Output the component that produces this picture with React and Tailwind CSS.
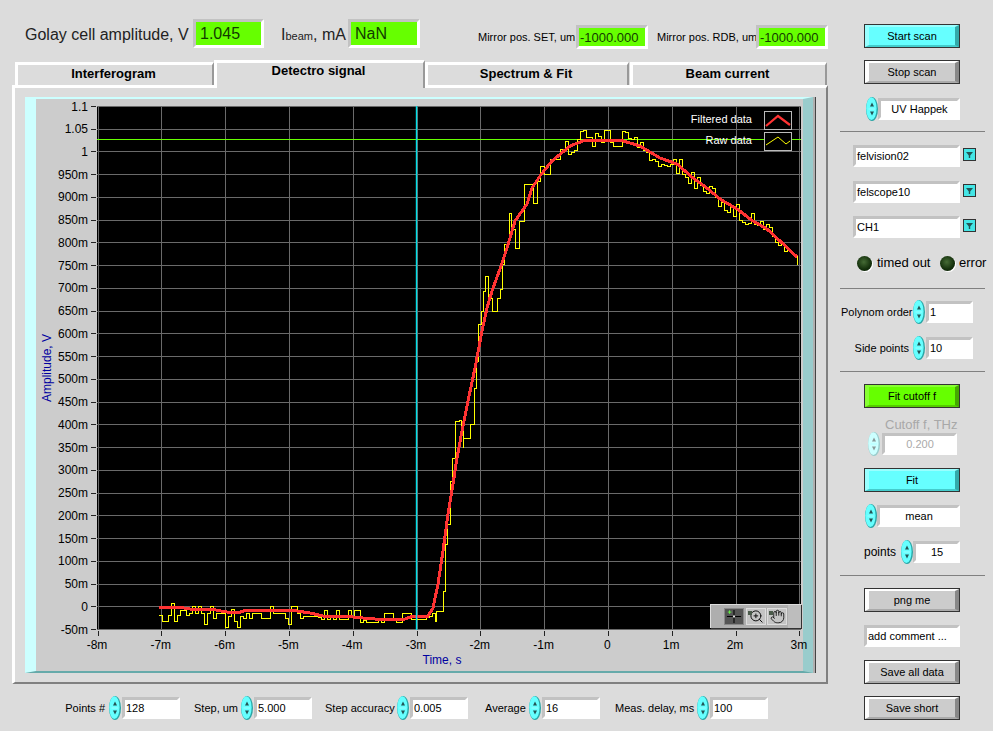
import { ZoomIn, Hand } from 'lucide-react'

const FONT = "font-['Liberation_Sans',sans-serif]"

// plot geometry, in page pixels
const X_TICKS = ['-8m', '-7m', '-6m', '-5m', '-4m', '-3m', '-2m', '-1m', '0', '1m', '2m', '3m']
const Y_TICKS = ['1.1', '1.05', '1']
for (let v = 950; v >= 50; v -= 50) Y_TICKS.push(v + 'm')
Y_TICKS.push('0', '-50m')
const xAt = (i) => 98 + i * 63.8
const yAt = (i) => 105.5 + i * 22.74

const RED = [
  [159, 606], [178, 606], [190, 608], [210, 608], [227, 611], [237, 612], [247, 609], [277, 609], [297, 610],
  [310, 612], [323, 615], [343, 615], [363, 617], [387, 619], [405, 618], [413, 615], [428, 615], [433, 607],
  [438, 583], [443, 550], [448, 513], [453, 483], [457, 457], [462, 430], [468, 400], [475, 367], [482, 330],
  [487, 307], [492, 290], [500, 268], [507, 247], [515, 220], [527, 203], [532, 187], [540, 175], [552, 160],
  [570, 145], [583, 140], [600, 139], [620, 139], [640, 145], [660, 157], [677, 163], [693, 177], [707, 187],
  [720, 198], [737, 208], [753, 220], [767, 228], [780, 240], [797, 256],
]

const RISE = [
  [435, 620], [436, 610], [440, 610], [443, 590], [445, 543], [447, 523], [450, 480], [452, 457], [455, 420],
  [459, 419], [461, 428], [463, 447], [463, 437], [467, 437], [470, 423], [474, 387], [476, 360], [478, 323],
  [481, 310], [483, 290], [485, 275], [488, 297], [492, 310], [494, 310], [497, 297], [500, 288], [502, 263],
  [504, 243], [509, 212], [511, 228], [515, 247], [519, 220], [524, 183], [528, 183], [533, 202], [537, 180],
  [540, 165], [544, 173], [550, 158], [560, 148], [565, 140],
]

function redAt(x) {
  for (let i = 1; i < RED.length; i++) {
    if (x <= RED[i][0]) {
      const [x0, y0] = RED[i - 1]
      const [x1, y1] = RED[i]
      return y0 + ((y1 - y0) * (x - x0)) / (x1 - x0)
    }
  }
  return RED[RED.length - 1][1]
}

function rawPath() {
  let seed = 41
  const rnd = () => {
    seed = (seed * 1103515 + 12345) % 2147483648
    return (seed >> 8) % 1000 / 1000
  }
  let d = ''
  let last = null
  const step = (x, y) => {
    d += last === null ? `M${x} ${y}` : `H${x}V${y}`
    last = y
  }
  for (let x = 159; x < 435; x += 3) {
    const r = rnd()
    const quiet = x > 305
    let off = r < 0.4 ? 3 : r < 0.65 ? -4 : r < 0.85 ? 8 : 14
    if (quiet) off = r < 0.62 ? 3 : r < 0.82 ? -6 : r < 0.95 ? 1 : 12
    step(x, Math.round(redAt(x) / 3) * 3 + off)
  }
  for (const [x, y] of RISE) step(x, y)
  for (let x = 568; x <= 795; x += 3) {
    const r = rnd()
    let off = r < 0.3 ? 2 : r < 0.55 ? 6 : r < 0.8 ? -4 : r < 0.92 ? 9 : -7
    if (x > 578 && x < 584) off = -11
    if (x > 603 && x < 609) off = -10
    if (x > 621 && x < 627) off = -10
    step(x, Math.round(redAt(x)) + off)
  }
  step(797, 264)
  return d
}

function Plot() {
  return (
    <svg viewBox="36 98 767 573" className="block h-[573px] w-[767px] overflow-visible">
      <rect x="97" y="105" width="704" height="524" fill="#000" />
      <g stroke="#6a6a6a" strokeWidth="1" shapeRendering="crispEdges">
        {X_TICKS.map((_, i) => (
          <line key={i} x1={xAt(i)} x2={xAt(i)} y1="105" y2="629" />
        ))}
        {Y_TICKS.map((_, i) => (
          <line key={i} x1="97" x2="801" y1={yAt(i)} y2={yAt(i)} />
        ))}
      </g>
      <line x1="97" x2="801" y1="138.5" y2="138.5" stroke="#66ff00" shapeRendering="crispEdges" />
      <path d={rawPath()} fill="none" stroke="#ffff00" strokeWidth="1" shapeRendering="crispEdges" />
      <polyline points={RED.map((p) => p.join(',')).join(' ')} fill="none" stroke="#ff3333" strokeWidth="3" shapeRendering="crispEdges" />
      <line x1="416.5" x2="416.5" y1="105" y2="629" stroke="#00e0e8" strokeWidth="1.4" />

      <g stroke="#222" shapeRendering="crispEdges">
        {X_TICKS.map((_, i) => (
          <line key={i} x1={xAt(i)} x2={xAt(i)} y1="630" y2="635" />
        ))}
        {Y_TICKS.map((_, i) => (
          <line key={i} x1="91" x2="96" y1={yAt(i)} y2={yAt(i)} />
        ))}
      </g>
      <g className={`${FONT} text-[12px]`} fill="#000">
        {X_TICKS.map((t, i) => (
          <text key={t} x={xAt(i) - 1} y="648" textAnchor="middle">{t}</text>
        ))}
        {Y_TICKS.map((t, i) => (
          <text key={t} x="88" y={yAt(i) + 4} textAnchor="end">{t}</text>
        ))}
      </g>
      <g className={`${FONT} text-[12px]`} fill="#0000a0">
        <text x="442" y="663" textAnchor="middle">Time, s</text>
        <text transform="translate(51 367) rotate(-90)" textAnchor="middle">Amplitude, V</text>
      </g>

      <g className={`${FONT} text-[11px]`} fill="#fff">
        <text x="752" y="122" textAnchor="end">Filtered data</text>
        <text x="752" y="143" textAnchor="end">Raw data</text>
      </g>
      <rect x="764.5" y="110.5" width="27" height="18" fill="#000" stroke="#bbb" />
      <polyline points="766,125 778,115 790,124" fill="none" stroke="#ff3333" strokeWidth="2.2" />
      <rect x="764.5" y="131.5" width="27" height="18" fill="#000" stroke="#bbb" />
      <polyline points="766,144 778,136 786,143 790,140" fill="none" stroke="#ffff00" strokeWidth="1" />
    </svg>
  )
}

function GraphPalette() {
  return (
    <div className="absolute left-[674px] top-[505px] flex h-[24px] w-[91px] items-center border-l border-t border-[#ddd] bg-[#aeaeae] pl-[13px] shadow-[1px_1px_0_#333]">
      <div className="relative h-[17px] w-[20px] border border-[#888] bg-[#555]">
        <svg viewBox="0 0 20 17" className="h-full w-full">
          <path d="M2 8.5H18M10 1V16" stroke="#000" strokeWidth="1.2" />
          <circle cx="10" cy="8.5" r="1.3" fill="#ddd" />
          <path d="M3 3.5H7M5 1.5V5.5" stroke="#66ff44" strokeWidth="1" />
        </svg>
      </div>
      <div className="relative ml-[2px] flex h-[17px] w-[20px] items-center justify-center border border-[#ddd] bg-[#c4c4c4]">
        <span className="absolute left-[1px] top-[2px] h-[4px] w-[4px] bg-[#4a5a4a]" />
        <ZoomIn size={15} strokeWidth={1.6} color="#111" />
      </div>
      <div className="relative ml-[1px] flex h-[17px] w-[20px] items-center justify-center border border-[#ddd] bg-[#c4c4c4]">
        <span className="absolute left-[1px] top-[2px] h-[4px] w-[4px] bg-[#4a5a4a]" />
        <Hand size={15} strokeWidth={1.4} color="#111" />
      </div>
      <div className="ml-[1px] h-full flex-1 bg-[#bdbdbd]" />
    </div>
  )
}

function Indicator({ w, h, big, children }) {
  return (
    <div
      className={`box-border flex items-center border-[3px] border-l-[#c2c2c2] border-t-[#c2c2c2] border-r-white border-b-white bg-[#66ff00] text-[#123c00] ${w} ${h} ${
        big ? 'pl-[4px] text-[16px]' : 'pl-[1px] pt-[1px] text-[13px]'
      }`}
    >
      {children}
    </div>
  )
}

function Tab({ w, active, children }) {
  if (active) {
    return (
      <div className={`relative z-10 -mb-[3px] box-border flex h-[28px] items-start justify-center border-l-[3px] border-t-[3px] border-r-[2px] border-l-white border-t-white border-r-[#999] bg-[#dcdcdc] pr-[3px] text-[13px] font-bold leading-[16px] text-black ${w}`}>
        {children}
      </div>
    )
  }
  return (
    <div className={`box-border flex h-[23px] items-center justify-center border-l-[3px] border-t-[3px] border-r-[2px] border-l-white border-t-white border-r-[#999] bg-[#dcdcdc] pb-[2px] pr-[3px] text-[13px] font-bold text-black ${w}`}>
      {children}
    </div>
  )
}

function Spin({ dim }) {
  const fill = dim ? '#ccffff' : '#66ffff'
  const edge = dim ? '#99cccc' : '#2aa5a5'
  const mark = dim ? '#8a9a9a' : '#225555'
  return (
    <svg viewBox="0 0 12 24" className="block h-[24px] w-[12px] shrink-0">
      <ellipse cx="6" cy="12" rx="6" ry="12" fill={edge} />
      <ellipse cx="5.4" cy="11.6" rx="5.2" ry="11.4" fill={fill} />
      <path d="M6 5.5L4 9.5H8ZM6 18.5L4 14.5H8Z" fill={mark} />
      <path d="M2.5 12H9" stroke="#aaffff" strokeWidth="0.8" />
    </svg>
  )
}

function Field({ w, center, dim, children }) {
  return (
    <div
      className={`box-border flex h-[22px] items-center whitespace-nowrap border-[3px] border-l-[#c2c2c2] border-t-[#c2c2c2] border-r-white border-b-white bg-white pl-[1px] text-[11px] ${
        dim ? 'text-[#aaa]' : 'text-black'
      } ${center ? 'justify-center' : ''} ${w}`}
    >
      {children}
    </div>
  )
}

function Btn({ kind, className, children }) {
  const face = {
    cyan: 'border-l-[#99ffff] border-t-[#99ffff] border-r-[#33aaaa] border-b-[#44cccc] bg-[#66ffff]',
    green: 'border-l-[#88ff33] border-t-[#88ff33] border-r-[#44aa00] border-b-[#55cc00] bg-[#66ff00]',
    gray: 'border-l-white border-t-white border-r-[#888] border-b-[#aaa] bg-[#cccccc]',
  }[kind]
  return (
    <div className={`box-border h-[24px] w-[96px] border border-[#333] ${className}`}>
      <div className={`box-border flex h-full items-center justify-center border-b-[2px] border-l-[4px] border-r-[4px] border-t-[2px] text-[11px] text-black ${face}`}>
        {children}
      </div>
    </div>
  )
}

function Sep({ className }) {
  return <div className={`ml-[5px] h-px w-[145px] bg-[#808080] ${className}`} />
}

function Drop({ className, children }) {
  return (
    <div className={`ml-[18px] flex items-start ${className}`}>
      <Field w="w-[107px]">{children}</Field>
      <div className="ml-[3px] mt-[3px] box-border flex h-[13px] w-[13px] items-center justify-center border border-[#333] bg-[#44e6e6]">
        <svg viewBox="0 0 9 9" className="h-[9px] w-[9px]">
          <path d="M1 2H8L5.2 5.5V8H3.8V5.5Z" fill="#225555" />
        </svg>
      </div>
    </div>
  )
}

function Led() {
  return (
    <div className="h-[15px] w-[15px] shrink-0 rounded-full bg-[radial-gradient(circle_at_45%_40%,#456b35,#14300c_60%,#0a1a06)] shadow-[1px_1px_0_#fff]" />
  )
}

function Knob({ label, labelW, fieldW, ml, children }) {
  return (
    <div className={`flex items-center ${ml}`}>
      <span className={`whitespace-nowrap text-right text-[11px] text-black ${labelW}`}>{label}</span>
      <div className="ml-[4px] mr-[1px]"><Spin /></div>
      <Field w={fieldW}>{children}</Field>
    </div>
  )
}

export default function App() {
  return (
    <div className={`flex h-[731px] w-[993px] overflow-hidden bg-[#dcdcdc] ${FONT}`}>
      <div className="w-[835px] shrink-0">
        <div className="flex h-[60px] items-start pl-[25px] pt-[19px]">
          <span className="w-[165px] whitespace-nowrap pt-[4px] text-[16px] text-[#222]">Golay cell amplitude, V</span>
          <div className="ml-[3px]"><Indicator w="w-[71px]" h="h-[29px]" big>1.045</Indicator></div>
          <span className="ml-[17px] w-[64px] whitespace-nowrap pt-[4px] text-[16px] text-[#222]">
            I<span className="text-[11px]">beam</span>, mA
          </span>
          <div className="ml-[3px]"><Indicator w="w-[72px]" h="h-[29px]" big>NaN</Indicator></div>
          <span className="ml-[58px] mt-[10px] w-[94px] whitespace-nowrap text-[11px] text-black">Mirror pos. SET, um</span>
          <div className="ml-[4px] mt-[6px]"><Indicator w="w-[72px]" h="h-[24px]">-1000.000</Indicator></div>
          <span className="ml-[9px] mt-[10px] w-[95px] whitespace-nowrap text-[11px] text-black">Mirror pos. RDB, um</span>
          <div className="ml-[4px] mt-[6px]"><Indicator w="w-[72px]" h="h-[24px]">-1000.000</Indicator></div>
        </div>

        <div className="flex h-[25px] items-end pl-[15px]">
          <Tab w="w-[199px]">Interferogram</Tab>
          <Tab w="w-[211px]" active>Detectro signal</Tab>
          <Tab w="w-[204px]">Spectrum &amp; Fit</Tab>
          <div className="ml-[1px]"><Tab w="w-[197px]">Beam current</Tab></div>
        </div>

        <div className="ml-[12px] box-border h-[599px] w-[816px] border-b-[2px] border-l-[3px] border-r-[2px] border-t-[3px] border-b-[#808080] border-l-white border-r-[#808080] border-t-white pl-[10px] pt-[9px]">
          <div className="box-border h-[576px] w-[788px] border-b-[2px] border-l-[11px] border-r-[10px] border-t-[2px] border-b-[#66aaaa] border-l-[#ccffff] border-r-[#99cccc] border-t-[#ccffff] shadow-[2px_0_0_#b0b0b0,3px_0_0_#444]">
            <div className="relative h-[572px] bg-[#cccccc]">
              <Plot />
              <GraphPalette />
            </div>
          </div>
        </div>

        <div className="flex items-center pt-[12px]">
          <Knob label="Points #" labelW="w-[40px]" fieldW="w-[58px]" ml="ml-[65px]">128</Knob>
          <Knob label="Step, um" labelW="w-[43px]" fieldW="w-[58px]" ml="ml-[14px]">5.000</Knob>
          <Knob label="Step accuracy" labelW="w-[68px]" fieldW="w-[58px]" ml="ml-[13px]">0.005</Knob>
          <Knob label="Average" labelW="w-[40px]" fieldW="w-[58px]" ml="ml-[17px]">16</Knob>
          <Knob label="Meas. delay, ms" labelW="w-[78px]" fieldW="w-[58px]" ml="ml-[15px]">100</Knob>
        </div>
      </div>

      <div className="flex w-[158px] flex-col items-start pt-[24px]">
        <Btn kind="cyan" className="ml-[29px]">Start scan</Btn>
        <Btn kind="gray" className="ml-[29px] mt-[12px]">Stop scan</Btn>
        <div className="ml-[31px] mt-[13px] flex items-center">
          <Spin />
          <Field w="w-[82px]" center>UV Happek</Field>
        </div>
        <Sep className="mt-[10px]" />

        <Drop className="mt-[13px]">felvision02</Drop>
        <Drop className="mt-[14px]">felscope10</Drop>
        <Drop className="mt-[13px]">CH1</Drop>
        <div className="ml-[22px] mt-[17px] flex h-[16px] items-center whitespace-nowrap text-[13px] text-black">
          <Led />
          <span className="ml-[5px] w-[63px]">timed out</span>
          <Led />
          <span className="ml-[4px]">error</span>
        </div>
        <Sep className="mt-[17px]" />

        <div className="ml-[6px] mt-[11px]">
          <Knob label="Polynom order" labelW="w-[68px]" fieldW="w-[47px]">1</Knob>
        </div>
        <div className="ml-[6px] mt-[12px]">
          <Knob label="Side points" labelW="w-[68px]" fieldW="w-[47px]">10</Knob>
        </div>
        <Sep className="mt-[11px]" />

        <Btn kind="green" className="ml-[29px] mt-[12px]">Fit cutoff f</Btn>
        <span className="ml-[50px] mt-[8px] h-[16px] whitespace-nowrap text-[13px] leading-[17px] text-[#a8a8a8]">Cutoff f, THz</span>
        <div className="ml-[33px] flex items-center">
          <Spin dim />
          <div className="ml-[2px]"><Field w="w-[75px]" center dim>0.200</Field></div>
        </div>
        <Btn kind="cyan" className="ml-[29px] mt-[12px]">Fit</Btn>
        <div className="ml-[30px] mt-[12px] flex items-center">
          <Spin />
          <Field w="w-[83px]" center>mean</Field>
        </div>
        <div className="ml-[29px] mt-[12px] flex items-center">
          <span className="w-[33px] text-[12px] text-black">points</span>
          <div className="ml-[4px]"><Spin /></div>
          <Field w="w-[47px]" center>15</Field>
        </div>
        <Sep className="mt-[11px]" />

        <Btn kind="gray" className="ml-[29px] mt-[12px]">png me</Btn>
        <div className="ml-[29px] mt-[13px]"><Field w="w-[96px]">add comment ...</Field></div>
        <Btn kind="gray" className="ml-[29px] mt-[13px]">Save all data</Btn>
        <Btn kind="gray" className="ml-[29px] mt-[12px]">Save short</Btn>
      </div>
    </div>
  )
}
